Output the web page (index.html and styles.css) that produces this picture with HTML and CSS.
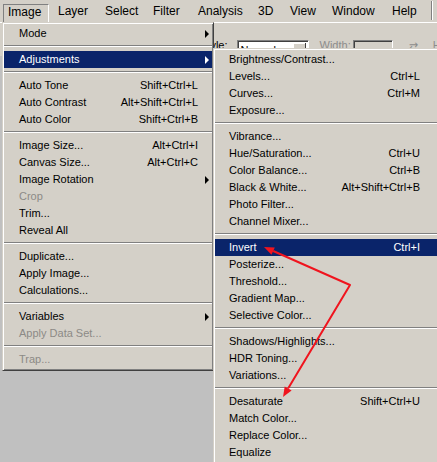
FILE: index.html
```html
<!DOCTYPE html>
<html>
<head>
<meta charset="utf-8">
<link rel="stylesheet" href="styles.css">
</head>
<body>
<div class="app">
  <div class="menubar">
    <span class="mb-item pressed">Image</span>
    <span class="mb-item">Layer</span>
    <span class="mb-item">Select</span>
    <span class="mb-item">Filter</span>
    <span class="mb-item">Analysis</span>
    <span class="mb-item">3D</span>
    <span class="mb-item">View</span>
    <span class="mb-item">Window</span>
    <span class="mb-item">Help</span>
    <span class="mb-sep"></span>
  </div>
  <div class="options">
    <span class="opt-label">Style:</span>
    <span class="dropdown"><span class="dd-text">Normal</span><span class="dd-btn"></span></span>
    <span class="opt-label dim w-label">Width:</span>
    <span class="field"></span>
    <span class="swap">&#8644;</span>
    <span class="opt-label dim">Height:</span>
  </div>
  <div class="workspace"></div>
</div>

<div class="menu main-menu">
  <div class="item"><span class="label">Mode</span><span class="key"></span><span class="sub-cell"><span class="arrow"></span></span></div>
  <div class="sep"></div>
  <div class="item active"><span class="label">Adjustments</span><span class="key"></span><span class="sub-cell"><span class="arrow"></span></span></div>
  <div class="sep"></div>
  <div class="item"><span class="label">Auto Tone</span><span class="key">Shift+Ctrl+L</span><span class="sub-cell"></span></div>
  <div class="item"><span class="label">Auto Contrast</span><span class="key">Alt+Shift+Ctrl+L</span><span class="sub-cell"></span></div>
  <div class="item"><span class="label">Auto Color</span><span class="key">Shift+Ctrl+B</span><span class="sub-cell"></span></div>
  <div class="sep"></div>
  <div class="item"><span class="label">Image Size...</span><span class="key">Alt+Ctrl+I</span><span class="sub-cell"></span></div>
  <div class="item"><span class="label">Canvas Size...</span><span class="key">Alt+Ctrl+C</span><span class="sub-cell"></span></div>
  <div class="item"><span class="label">Image Rotation</span><span class="key"></span><span class="sub-cell"><span class="arrow"></span></span></div>
  <div class="item disabled"><span class="label">Crop</span><span class="key"></span><span class="sub-cell"></span></div>
  <div class="item"><span class="label">Trim...</span><span class="key"></span><span class="sub-cell"></span></div>
  <div class="item"><span class="label">Reveal All</span><span class="key"></span><span class="sub-cell"></span></div>
  <div class="sep"></div>
  <div class="item"><span class="label">Duplicate...</span><span class="key"></span><span class="sub-cell"></span></div>
  <div class="item"><span class="label">Apply Image...</span><span class="key"></span><span class="sub-cell"></span></div>
  <div class="item"><span class="label">Calculations...</span><span class="key"></span><span class="sub-cell"></span></div>
  <div class="sep"></div>
  <div class="item"><span class="label">Variables</span><span class="key"></span><span class="sub-cell"><span class="arrow"></span></span></div>
  <div class="item disabled"><span class="label">Apply Data Set...</span><span class="key"></span><span class="sub-cell"></span></div>
  <div class="sep"></div>
  <div class="item disabled"><span class="label">Trap...</span><span class="key"></span><span class="sub-cell"></span></div>
</div>

<div class="menu sub-menu">
  <div class="item"><span class="label">Brightness/Contrast...</span><span class="key"></span><span class="sub-cell"></span></div>
  <div class="item"><span class="label">Levels...</span><span class="key">Ctrl+L</span><span class="sub-cell"></span></div>
  <div class="item"><span class="label">Curves...</span><span class="key">Ctrl+M</span><span class="sub-cell"></span></div>
  <div class="item"><span class="label">Exposure...</span><span class="key"></span><span class="sub-cell"></span></div>
  <div class="sep"></div>
  <div class="item"><span class="label">Vibrance...</span><span class="key"></span><span class="sub-cell"></span></div>
  <div class="item"><span class="label">Hue/Saturation...</span><span class="key">Ctrl+U</span><span class="sub-cell"></span></div>
  <div class="item"><span class="label">Color Balance...</span><span class="key">Ctrl+B</span><span class="sub-cell"></span></div>
  <div class="item"><span class="label">Black &amp; White...</span><span class="key">Alt+Shift+Ctrl+B</span><span class="sub-cell"></span></div>
  <div class="item"><span class="label">Photo Filter...</span><span class="key"></span><span class="sub-cell"></span></div>
  <div class="item"><span class="label">Channel Mixer...</span><span class="key"></span><span class="sub-cell"></span></div>
  <div class="sep"></div>
  <div class="item active"><span class="label">Invert</span><span class="key">Ctrl+I</span><span class="sub-cell"></span></div>
  <div class="item"><span class="label">Posterize...</span><span class="key"></span><span class="sub-cell"></span></div>
  <div class="item"><span class="label">Threshold...</span><span class="key"></span><span class="sub-cell"></span></div>
  <div class="item"><span class="label">Gradient Map...</span><span class="key"></span><span class="sub-cell"></span></div>
  <div class="item"><span class="label">Selective Color...</span><span class="key"></span><span class="sub-cell"></span></div>
  <div class="sep"></div>
  <div class="item"><span class="label">Shadows/Highlights...</span><span class="key"></span><span class="sub-cell"></span></div>
  <div class="item"><span class="label">HDR Toning...</span><span class="key"></span><span class="sub-cell"></span></div>
  <div class="item"><span class="label">Variations...</span><span class="key"></span><span class="sub-cell"></span></div>
  <div class="sep"></div>
  <div class="item"><span class="label">Desaturate</span><span class="key">Shift+Ctrl+U</span><span class="sub-cell"></span></div>
  <div class="item"><span class="label">Match Color...</span><span class="key"></span><span class="sub-cell"></span></div>
  <div class="item"><span class="label">Replace Color...</span><span class="key"></span><span class="sub-cell"></span></div>
  <div class="item"><span class="label">Equalize</span><span class="key"></span><span class="sub-cell"></span></div>
</div>

<svg class="arrows" width="437" height="462" viewBox="0 0 437 462">
  <polyline points="273.2,251 350,285 288.1,388.4" fill="none" stroke="#f0141e" stroke-width="2" stroke-linejoin="round"/>
  <polygon points="264,247 274.8,247.4 271.5,254.7" fill="#f0141e"/>
  <polygon points="283,397 291.6,390.5 284.7,386.4" fill="#f0141e"/>
</svg>
</body>
</html>
```

FILE: styles.css
```css
html, body {
  margin: 0;
  padding: 0;
}
body {
  width: 437px;
  height: 462px;
  overflow: hidden;
  position: relative;
  background: #c0c0c0;
  font-family: "Liberation Sans", Arial, sans-serif;
  font-size: 11px;
  color: #000;
}
.app {
  display: flex;
  flex-direction: column;
  height: 462px;
}
.menubar {
  height: 22px;
  background: #d4d0c8;
  display: grid;
  grid-template-columns: 50px 47px 48px 45px 60px 32px 42px 60px 44px 2px;
  align-items: center;
  padding-left: 3px;
  font-size: 12px;
  flex: none;
}
.mb-item {
  padding-left: 5px;
  line-height: 16px;
}
.mb-item.pressed {
  width: 46px;
  box-sizing: border-box;
  padding-left: 4px;
  margin-top: 4px;
  height: 18px;
  line-height: 15px;
  border-top: 1px solid #808080;
  border-left: 1px solid #808080;
  border-right: 1px solid #fff;
}
.mb-sep {
  height: 19px;
  border-left: 1px solid #808080;
  border-right: 1px solid #fff;
  align-self: start;
  margin-top: 1px;
}
.options {
  height: 34px;
  background: #d4d0c8;
  border-top: 1px solid #fff;
  box-sizing: border-box;
  display: flex;
  align-items: flex-start;
  padding-top: 17px;
  padding-left: 200px;
  flex: none;
  overflow: hidden;
}
.opt-label {
  line-height: 13px;
  margin-top: -1px;
  white-space: nowrap;
}
.opt-label.dim {
  color: #8c8c8c;
}
.dropdown {
  margin-left: 9px;
  width: 72px;
  height: 20px;
  flex: none;
  box-sizing: border-box;
  background: #fff;
  border-top: 1px solid #808080;
  border-left: 1px solid #808080;
  border-right: 1px solid #fff;
  border-bottom: 1px solid #fff;
  box-shadow: inset 1px 1px #404040;
  display: flex;
  justify-content: space-between;
  padding: 3px 2px 0 3px;
}
.dd-text {
  line-height: 13px;
}
.dd-btn {
  width: 13px;
  height: 14px;
  margin-top: -1px;
  background: #d4d0c8;
  box-shadow: inset -1px -1px #404040, inset 1px 1px #fff;
}
.w-label {
  margin-left: 11px;
}
.field {
  margin-left: 2px;
  width: 40px;
  height: 20px;
  flex: none;
  box-sizing: border-box;
  border-top: 1px solid #808080;
  border-left: 1px solid #808080;
  border-right: 1px solid #fff;
  border-bottom: 1px solid #fff;
  box-shadow: inset 1px 1px #404040;
}
.swap {
  margin-left: 16px;
  width: 12px;
  margin-right: 12px;
  flex: none;
  color: #8c8c8c;
  font-family: "DejaVu Sans", sans-serif;
  font-size: 11px;
  line-height: 13px;
}
.workspace {
  flex: 1;
  background: #c0c0c0;
}

/* menus */
.menu {
  position: absolute;
  background: #d4d0c8;
  border: 1px solid;
  border-color: #d4d0c8 #404040 #404040 #d4d0c8;
  box-shadow: inset 1px 1px #fff, inset -1px -1px #808080;
  padding: 2px 1px;
  box-sizing: border-box;
}
.main-menu {
  left: 2px;
  top: 22px;
  width: 212px;
  height: 349px;
}
.sub-menu {
  left: 213px;
  top: 48px;
  width: 232px;
  height: 430px;
}
.item {
  height: 17px;
  line-height: 17px;
  display: flex;
  align-items: center;
  padding-left: 15px;
  white-space: nowrap;
}
.sub-menu .item {
  padding-left: 14px;
}
.item .label {
  flex: 1;
}
.item .key {
  text-align: right;
}
.sub-cell {
  width: 14px;
  height: 17px;
  display: flex;
  align-items: center;
  justify-content: flex-end;
  padding-right: 3px;
  box-sizing: border-box;
}
.sub-menu .sub-cell {
  width: 23px;
}
.arrow {
  width: 0;
  height: 0;
  border-top: 4px solid transparent;
  border-bottom: 4px solid transparent;
  border-left: 4px solid #000;
}
.item.active {
  background: #0a246a;
  color: #fff;
}
.item.active .arrow {
  border-left-color: #fff;
}
.item.disabled {
  color: #8c8a86;
}
.sep {
  margin: 3px 0 4px;
  border-top: 1px solid #808080;
  border-bottom: 1px solid #fff;
}
.arrows {
  position: absolute;
  left: 0;
  top: 0;
  pointer-events: none;
}
```
